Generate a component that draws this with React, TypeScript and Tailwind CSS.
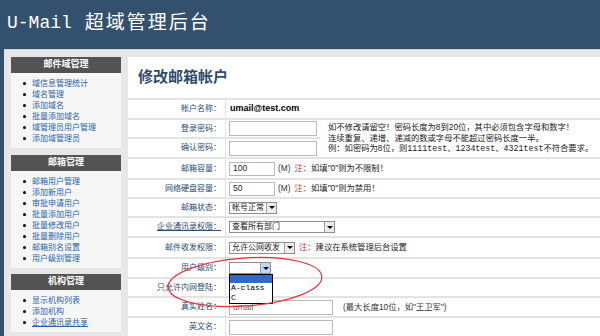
const sans = "font-['Liberation_Sans','Noto_Sans_CJK_SC',sans-serif]";
const mono = "font-['Liberation_Mono','Noto_Sans_CJK_SC',monospace]";

const domainItems = ["域信息管理统计", "域名管理", "添加域名", "批量添加域名", "域管理员用户管理", "添加域管理员"];
const mailItems = ["邮箱用户管理", "添加新用户", "审批申请用户", "批量添加用户", "批量修改用户", "批量删除用户", "邮箱别名设置", "用户级别管理"];
const orgItems = ["显示机构列表", "添加机构", "企业通讯录共享"];

function Panel({ title, items, className }: { title: string; items: string[]; className?: string }) {
  return (
    <div className={className}>
      <div className="h-[16px] bg-[#535353] text-white text-[9px] font-bold flex items-center justify-center">{title}</div>
      <ul className="bg-[#f6f6f6] pt-[5px] pb-[4px]">
        {items.map((item) => (
          <li key={item} className="flex items-center h-[11px] pl-[12px]">
            <span className="w-[3px] h-[3px] rounded-full bg-black" />
            <a href="#" className={"ml-[6px] text-[8px] leading-[11px] text-[#1f63ad] " + (item === "企业通讯录共享" ? "underline" : "")}>
              {item}
            </a>
          </li>
        ))}
      </ul>
    </div>
  );
}

function Select({ text, className, open }: { text: string; className: string; open?: boolean }) {
  return (
    <div className={"flex h-[12px] items-stretch border border-[#8e8e8e] bg-white " + className}>
      <span className="flex-1 pl-[2px] text-[8px] leading-[10px] whitespace-nowrap overflow-hidden">{text}</span>
      <span
        className={
          "w-[10px] flex items-center justify-center border-l " +
          (open ? "bg-[#c4d6f8] border-[#7fa2d0]" : "bg-[#ebebeb] border-[#a0a0a0]")
        }
      >
        <span className="w-0 h-0 border-l-[3px] border-r-[3px] border-t-[3px] border-l-transparent border-r-transparent border-t-black" />
      </span>
    </div>
  );
}

function Input({ value, className }: { value?: string; className: string }) {
  return (
    <div className={"border border-[#b8b8b8] bg-white flex items-center pl-[3px] text-[8.5px] text-[#222] " + className}>
      {value}
    </div>
  );
}

const label = "flex items-center justify-end pr-[4px] border-t-2 border-r border-[#e3e3e3] text-[8px] text-[#2a4b72] whitespace-nowrap";
const cell = "col-span-2 flex items-center pl-[3px] border-t-2 border-[#e3e3e3] text-[8.3px] text-[#222] whitespace-nowrap";

function Note({ children }: { children: React.ReactNode }) {
  return (
    <>
      <span className="text-[#e52a2a] ml-[4px]">注：</span>
      <span>{children}</span>
    </>
  );
}

export default function App() {
  return (
    <div className={"relative w-[600px] h-[336px] overflow-hidden bg-[#34506f] " + sans}>
      <header className="h-[49px] flex items-center pl-[7px] pb-[3px] text-white">
        <span className={"text-[18px] " + mono}>U-Mail</span>
        <span className="ml-[13px] text-[19px] tracking-[2px]">超域管理后台</span>
      </header>

      <div className="ml-[4px] h-[287px] bg-[#e7e7e7] border-t border-[#d2d6db] pt-[7px] flex">
        <aside className="w-[124px] pl-[7px] pr-[7px]">
          <Panel title="邮件域管理" items={domainItems} />
          <Panel title="邮箱管理" items={mailItems} className="mt-[7px]" />
          <Panel title="机构管理" items={orgItems} className="mt-[6px]" />
        </aside>

        <main className="flex-1 bg-white">
          <h1 className="h-[41px] flex items-center pl-[10px] text-[15px] font-bold text-[#2f4b6b]">修改邮箱帐户</h1>

          <div className="grid grid-cols-[98px_94px_1fr] grid-rows-[20px_19px_20px_21px_19px_19px_20px_21px_20px_19px_20px_20px]">
            <div className={label}>帐户名称：</div>
            <div className={cell}>
              <span className="ml-[1px] text-[9px] font-bold text-black">umail@test.com</span>
            </div>

            <div className={label}>登录密码：</div>
            <div className="flex items-center pl-[3px] border-t-2 border-[#e3e3e3]">
              <Input className="w-[88px] h-[15px]" />
            </div>
            <div className="row-span-2 flex flex-col justify-center pl-[8px] border-t-2 border-[#e3e3e3] text-[8.3px] leading-[10.5px] text-[#222] whitespace-nowrap">
              <span>如不修改请留空！密码长度为8到20位，其中必须包含字母和数字！</span>
              <span>连续重复、递增、递减的数或字母不能超过密码长度一半。</span>
              <span>
                例：如密码为8位，则<span className={mono}>1111test</span>、<span className={mono}>1234test</span>、
                <span className={mono}>4321test</span>不符合要求。
              </span>
            </div>

            <div className={label}>确认密码：</div>
            <div className="flex items-center pl-[3px] border-t-2 border-[#e3e3e3]">
              <Input className="w-[88px] h-[15px]" />
            </div>

            <div className={label}>邮箱容量：</div>
            <div className={cell}>
              <Input value="100" className="w-[46px] h-[14px]" />
              <span className="ml-[3px] text-[#333]">(M)</span>
              <Note>如填"0"则为不限制！</Note>
            </div>

            <div className={label}>网络硬盘容量：</div>
            <div className={cell}>
              <Input value="50" className="w-[46px] h-[14px]" />
              <span className="ml-[3px] text-[#333]">(M)</span>
              <Note>如填"0"则为禁用！</Note>
            </div>

            <div className={label}>邮箱状态：</div>
            <div className={cell}>
              <Select text="帐号正常" className="w-[48px]" />
            </div>

            <div className={label}>
              <a href="#" className="underline text-[#2a4b72]">企业通讯录权限：</a>
            </div>
            <div className={cell}>
              <Select text="查看所有部门" className="w-[106px]" />
            </div>

            <div className={label}>邮件收发权限：</div>
            <div className={cell}>
              <Select text="允许公网收发" className="w-[66px]" />
              <Note>建议在系统管理后台设置</Note>
            </div>

            <div className={label}>用户级别：</div>
            <div className={cell}>
              <div className="relative z-10">
                <Select text="" className="w-[42px]" open />
                <div className={"absolute left-0 top-[12px] w-[44px] border border-black bg-white text-[8px] text-black " + mono}>
                  <div className="h-[8px] bg-[#3169c6]" />
                  <div className="h-[10px] leading-[10px] pl-[1px]">A-class</div>
                  <div className="h-[10px] leading-[10px] pl-[1px]">C</div>
                </div>
              </div>
            </div>

            <div className={label}>只允许内网登陆：</div>
            <div className={cell} />

            <div className={label}>真实姓名：</div>
            <div className={cell}>
              <Input value="umail" className="w-[104px] h-[15px] text-[#666]" />
              <span className="ml-[10px] text-[#333]">(最大长度10位，如"王卫军")</span>
            </div>

            <div className={label}>英文名：</div>
            <div className={cell}>
              <Input className="w-[104px] h-[15px]" />
            </div>
          </div>
        </main>
      </div>

      <svg className="absolute left-[164px] top-[253px] z-20 pointer-events-none" width="162" height="58" viewBox="0 0 162 58">
        <ellipse cx="81" cy="29" rx="77" ry="24" fill="none" stroke="#e0363a" strokeWidth="1.2" transform="rotate(-4 81 29)" />
      </svg>
    </div>
  );
}
